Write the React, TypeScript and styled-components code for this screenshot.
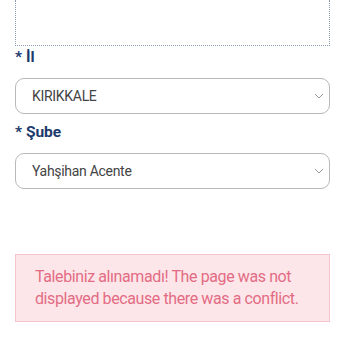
import styled, { createGlobalStyle } from 'styled-components';

const GlobalStyle = createGlobalStyle`
  html, body {
    margin: 0;
    padding: 0;
    background: #fff;
    font-family: Roboto, "Noto Sans", sans-serif;
  }
`;

const Page = styled.div`
  width: 315px;
  padding: 0 20px 0 15px;
  display: flex;
  flex-direction: column;
`;

const NoteArea = styled.div`
  height: 45px;
  border: 1px dotted #8e9bb0;
  border-top: none;
`;

const Label = styled.div<{ $top: number }>`
  margin-top: ${(p) => p.$top}px;
  font-size: 15.5px;
  line-height: 20px;
  font-weight: 700;
  color: #1d3a6c;
`;

const Select = styled.div`
  margin-top: 11px;
  height: 34px;
  border: 1px solid #b9b9b9;
  border-radius: 9px;
  display: flex;
  align-items: center;
  justify-content: space-between;
  padding: 0 5px 0 16px;
  font-size: 14px;
  letter-spacing: -0.3px;
  color: #444;
`;

const Chevron = () => (
  <svg width="10" height="6" viewBox="0 0 10 6" fill="none">
    <path d="M1 1l4 4 4-4" stroke="#9a9a9a" strokeWidth="1" />
  </svg>
);

const Alert = styled.div`
  margin-top: 65px;
  background: #fde6e9;
  border: 1px solid #f4c4cb;
  padding: 11px 19px;
  font-size: 16px;
  letter-spacing: -0.4px;
  line-height: 22px;
  color: #e36c84;
`;

export default function App() {
  return (
    <>
      <GlobalStyle />
      <Page>
        <NoteArea />
        <Label $top={1}>* İl</Label>
        <Select>
          <span>KIRIKKALE</span>
          <Chevron />
        </Select>
        <Label $top={8}>* Şube</Label>
        <Select>
          <span>Yahşihan Acente</span>
          <Chevron />
        </Select>
        <Alert>
          Talebiniz alınamadı! The page was not displayed because there was a conflict.
        </Alert>
      </Page>
    </>
  );
}
